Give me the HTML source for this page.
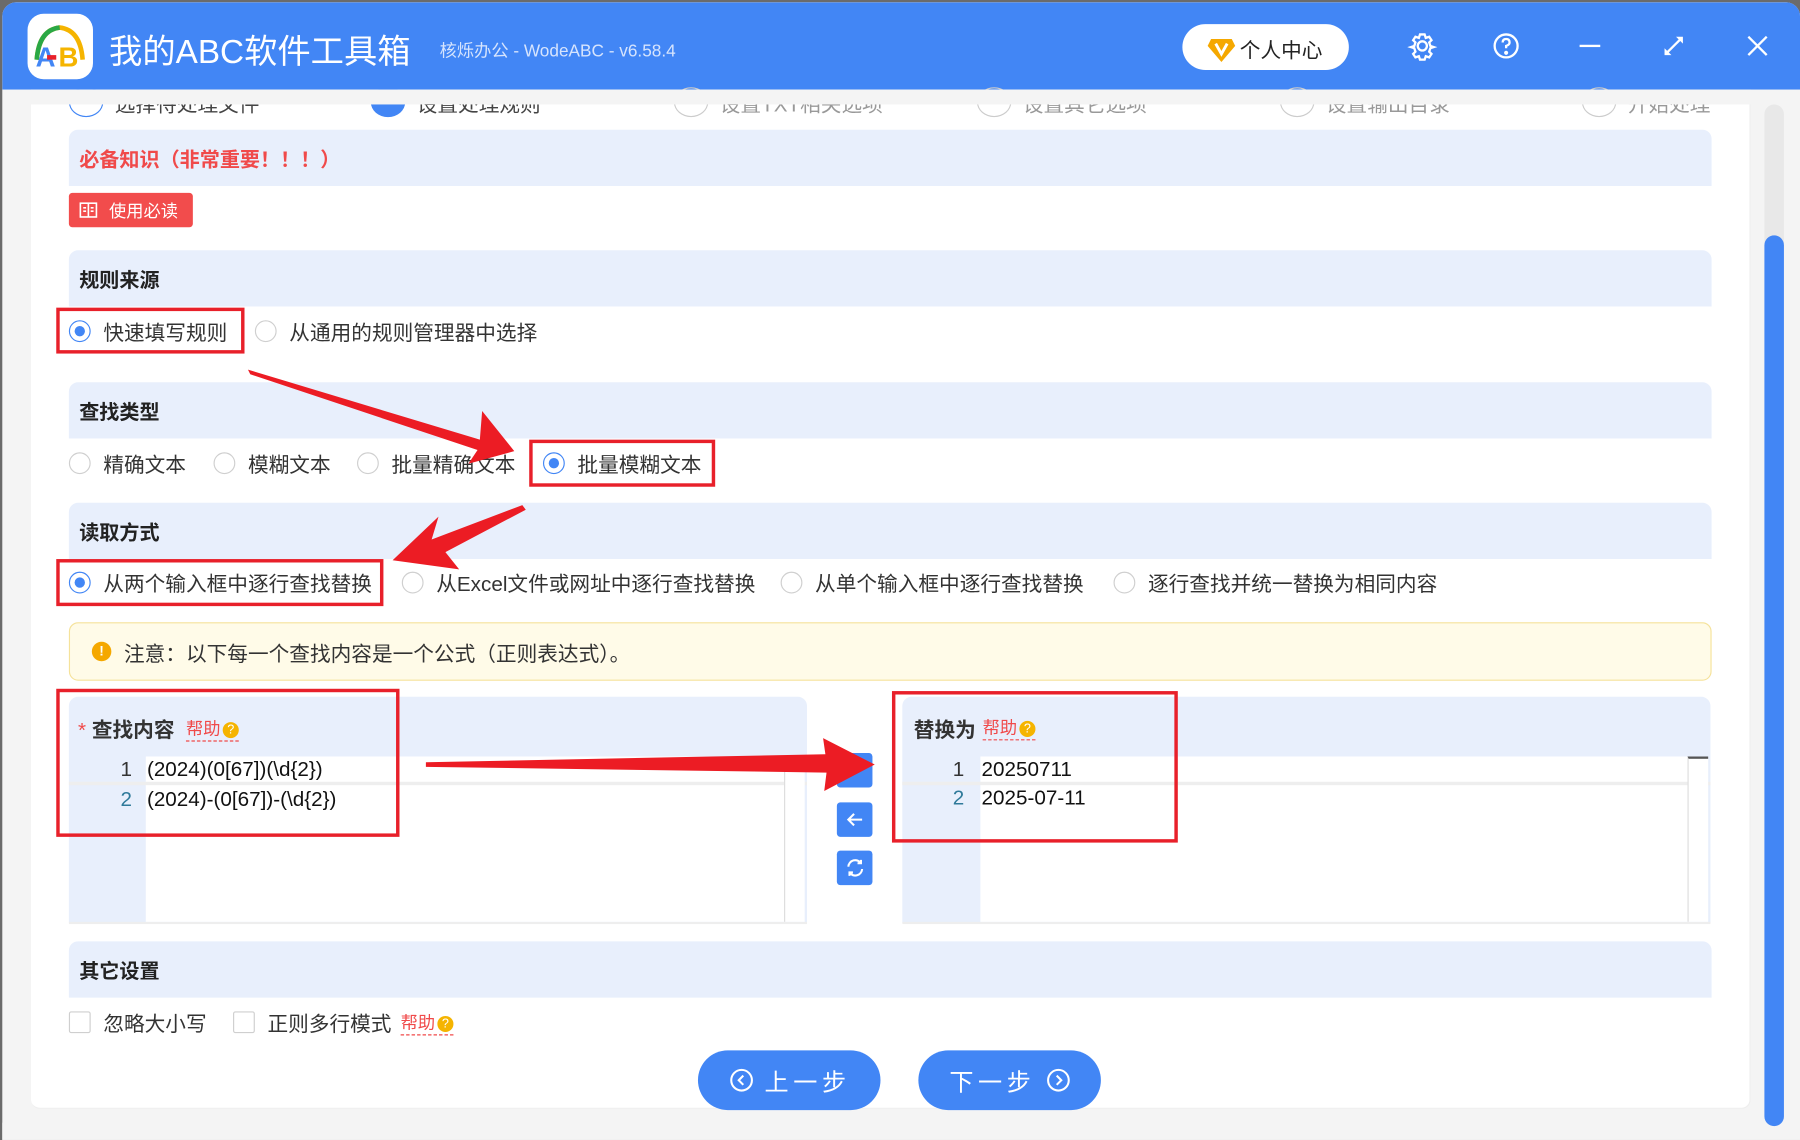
<!DOCTYPE html>
<html><head><meta charset="utf-8"><style>
*{margin:0;padding:0;box-sizing:border-box}
html,body{width:1800px;height:1140px;overflow:hidden;background:#5a5a5a}
#w{position:absolute;left:0;top:0;width:1568px;height:993px;transform:scale(1.14796);transform-origin:0 0;font-family:"Liberation Sans","Noto Sans CJK SC",sans-serif;color:#333}
.a{position:absolute}
.hd{position:absolute;left:60px;width:1431px;height:49px;background:#e8effc;border-radius:8px 8px 0 0;font-weight:bold;font-size:17.5px;padding:13px 0 0 9px;color:#222}
.rb{position:absolute;width:19px;height:19px;border:1px solid #cfcfcf;border-radius:50%;background:#fff}
.rb.on{border-color:#4286f5}
.rb.on:after{content:"";position:absolute;left:4px;top:4px;width:9px;height:9px;border-radius:50%;background:#4286f5}
.t{position:absolute;font-size:18px;color:#333;white-space:nowrap}
.red{position:absolute;border:3px solid #e8202a}
.cb{position:absolute;width:19px;height:19px;border:1px solid #cfcfcf;border-radius:2px;background:#fff}
.help{position:absolute;font-size:15px;color:#f04a4a;border-bottom:1px dashed #f04a4a;white-space:nowrap}
.q{display:inline-block;width:14px;height:14px;border-radius:50%;background:#f5b400;color:#fff;font-size:11px;text-align:center;line-height:14px;margin-left:2px;vertical-align:1px}
.mb{position:absolute;left:729px;width:31px;height:30px;background:#4286f5;border-radius:3px}
</style></head><body><div id="w">
<div class="a" style="left:0;top:0;width:1568px;height:993px;background:#6b6b6b"></div>
<div class="a" style="left:2px;top:2px;width:1566px;height:991px;background:#f4f4f4;border-radius:12px 12px 0 0;overflow:hidden">
<div class="a" style="left:0;top:0;width:1566px;height:76px;background:#4286f5"></div>
</div>
<div class="a" style="left:24px;top:12px;width:57px;height:57px;background:#fff;border-radius:14px"></div>
<svg class="a" style="left:24px;top:12px" width="57" height="57" viewBox="0 0 57 57">
<path d="M8 40 Q10 14 28 12 Q46 14 48 40" fill="none" stroke="#f5b400" stroke-width="4"/>
<path d="M8 40 Q10 14 28 12" fill="none" stroke="#2aa845" stroke-width="4"/>
<text x="7" y="46" font-family="Liberation Sans" font-weight="bold" font-size="24" fill="#4286f5">A</text>
<text x="27" y="46" font-family="Liberation Sans" font-weight="bold" font-size="24" fill="#f5b400">B</text>
<rect x="17" y="36" width="8" height="4" fill="#e8202a"/>
</svg>
<div class="t" style="left:95px;top:22px;font-size:29px;color:#fff">我的ABC软件工具箱</div>
<div class="t" style="left:383px;top:33px;font-size:15px;color:#d6e4fd">核烁办公 - WodeABC - v6.58.4</div>
<div class="a" style="left:1030px;top:21px;width:145px;height:40px;background:#fff;border-radius:20px"></div>
<svg class="a" style="left:1051px;top:30px" width="26" height="26" viewBox="0 0 26 26"><path d="M4 4h18l3 6-12 14L1 10z" fill="#f5a800"/><path d="M8 8l5 9 5-9" fill="none" stroke="#fff" stroke-width="2.5"/></svg>
<div class="t" style="left:1080px;top:30px;font-size:18px;color:#222">个人中心</div>
<svg class="a" style="left:1226px;top:27px" width="26" height="26" viewBox="0 0 26 26" fill="none" stroke="#fff" stroke-width="2"><circle cx="13" cy="13" r="4"/><path d="M11 3h4l1 3 3-1 2 3-2 2 1 3 3 1v0l-3 1-1 3 2 2-2 3-3-1-1 3h-4l-1-3-3 1-2-3 2-2-1-3-3-1 3-1 1-3-2-2 2-3 3 1z"/></svg>
<svg class="a" style="left:1299px;top:27px" width="26" height="26" viewBox="0 0 26 26" fill="none" stroke="#fff" stroke-width="2"><circle cx="13" cy="13" r="10"/><path d="M10 10q0-3 3-3t3 3q0 2-3 3v2"/><circle cx="13" cy="19" r="0.8" fill="#fff"/></svg>
<div class="a" style="left:1376px;top:39px;width:18px;height:2px;background:#fff"></div>
<svg class="a" style="left:1447px;top:29px" width="22" height="22" viewBox="0 0 22 22" stroke="#fff" stroke-width="2" fill="#fff"><path d="M4 18L18 4"/><path d="M13 3h6v6z M3 13v6h6z" stroke="none"/></svg>
<svg class="a" style="left:1520px;top:29px" width="22" height="22" viewBox="0 0 22 22" stroke="#fff" stroke-width="2"><path d="M3 3l16 16M19 3L3 19"/></svg>
<div class="a" style="left:27px;top:91px;width:1498px;height:875px;background:#fff;border-right:1px solid #eee;border-bottom:1px solid #eee;border-radius:0 0 8px 8px"></div>
<div class="a" style="left:2px;top:978px;width:1566px;height:15px;background:#f4f4f4"></div>
<div class="a" style="left:27px;top:78px;width:1498px;height:13px;background:#f4f4f4;z-index:2"></div>
<div class="a" style="left:60px;top:76px;width:30px;height:26px;border:1px solid #4286f5;border-radius:50%"></div>
<div class="t" style="left:100px;top:77px;color:#444">选择待处理文件</div>
<div class="a" style="left:323px;top:76px;width:30px;height:26px;background:#4286f5;border-radius:50%"></div>
<div class="t" style="left:363px;top:77px;color:#444">设置处理规则</div>
<div class="a" style="left:587px;top:76px;width:30px;height:26px;border:1px solid #ccc;border-radius:50%"></div>
<div class="t" style="left:627px;top:77px;color:#999">设置TXT相关选项</div>
<div class="a" style="left:851px;top:76px;width:30px;height:26px;border:1px solid #ccc;border-radius:50%"></div>
<div class="t" style="left:891px;top:77px;color:#999">设置其它选项</div>
<div class="a" style="left:1115px;top:76px;width:30px;height:26px;border:1px solid #ccc;border-radius:50%"></div>
<div class="t" style="left:1155px;top:77px;color:#999">设置输出目录</div>
<div class="a" style="left:1378px;top:76px;width:30px;height:26px;border:1px solid #ccc;border-radius:50%"></div>
<div class="t" style="left:1418px;top:77px;color:#999">开始处理</div>
<div class="a" style="left:1537px;top:91px;width:17px;height:890px;background:#e8e8e8;border-radius:9px"></div>
<div class="a" style="left:1537px;top:205px;width:17px;height:776px;background:#4286f5;border-radius:9px"></div>

<div class="hd" style="top:113px;color:#f04a4a">必备知识（非常重要！！！）</div>
<div class="a" style="left:60px;top:168px;width:108px;height:30px;background:#f24c4c;border-radius:3px"></div>
<svg class="a" style="left:69px;top:176px" width="16" height="14" viewBox="0 0 16 14" fill="none" stroke="#fff" stroke-width="1.4"><rect x="1" y="1" width="14" height="12"/><path d="M8 1v12M3.5 5h2.5M3.5 8h2.5M10 5h2.5M10 8h2.5"/></svg>
<div class="t" style="left:95px;top:173px;font-size:15px;color:#fff">使用必读</div>

<div class="hd" style="top:218px">规则来源</div>
<div class="rb on" style="left:60px;top:279px"></div><div class="t" style="left:90px;top:276px">快速填写规则</div>
<div class="rb" style="left:222px;top:279px"></div><div class="t" style="left:252px;top:276px">从通用的规则管理器中选择</div>
<div class="red" style="left:49px;top:268px;width:164px;height:40px"></div>

<div class="hd" style="top:333px">查找类型</div>
<div class="rb" style="left:60px;top:394px"></div><div class="t" style="left:90px;top:391px">精确文本</div>
<div class="rb" style="left:186px;top:394px"></div><div class="t" style="left:216px;top:391px">模糊文本</div>
<div class="rb" style="left:311px;top:394px"></div><div class="t" style="left:341px;top:391px">批量精确文本</div>
<div class="rb on" style="left:473px;top:394px"></div><div class="t" style="left:503px;top:391px">批量模糊文本</div>
<div class="red" style="left:461px;top:383px;width:162px;height:41px"></div>

<div class="hd" style="top:438px">读取方式</div>
<div class="rb on" style="left:60px;top:498px"></div><div class="t" style="left:90px;top:495px">从两个输入框中逐行查找替换</div>
<div class="rb" style="left:350px;top:498px"></div><div class="t" style="left:380px;top:495px">从Excel文件或网址中逐行查找替换</div>
<div class="rb" style="left:680px;top:498px"></div><div class="t" style="left:710px;top:495px">从单个输入框中逐行查找替换</div>
<div class="rb" style="left:970px;top:498px"></div><div class="t" style="left:1000px;top:495px">逐行查找并统一替换为相同内容</div>
<div class="red" style="left:49px;top:487px;width:285px;height:41px"></div>

<div class="a" style="left:60px;top:542px;width:1431px;height:51px;background:#fffbe8;border:1px solid #f5e29a;border-radius:8px"></div>
<div class="a" style="left:80px;top:559px;width:17px;height:17px;border-radius:50%;background:#f5a800;color:#fff;font-size:12px;text-align:center;line-height:17px;font-weight:bold">!</div>
<div class="t" style="left:108px;top:556px">注意：以下每一个查找内容是一个公式（正则表达式）。</div>

<div class="a" style="left:60px;top:607px;width:643px;height:198px;background:#e8effc;border-radius:8px 8px 0 0;border-bottom:2px solid #eee"></div>
<div class="t" style="left:68px;top:622px;font-weight:bold"><span style="color:#f04a4a;font-weight:normal">*</span> 查找内容</div>
<div class="help" style="left:162px;top:624px">帮助<span class="q">?</span></div>
<div class="a" style="left:127px;top:659px;width:556px;height:144px;background:#fff"></div>
<div class="a" style="left:60px;top:659px;width:643px;height:25px;border-bottom:3px solid #eee"></div>
<div class="a" style="left:683px;top:659px;width:18px;height:144px;background:#fff;border-left:1px solid #ddd"></div>
<div class="t" style="left:105px;top:660px">1</div><div class="t" style="left:128px;top:660px;color:#111">(2024)(0[67])(\d{2})</div>
<div class="t" style="left:105px;top:686px;color:#2f7a9a">2</div><div class="t" style="left:128px;top:686px;color:#111">(2024)-(0[67])-(\d{2})</div>
<div class="red" style="left:49px;top:600px;width:299px;height:129px"></div>

<div class="mb" style="top:656px"></div>
<div class="mb" style="top:699px"></div><svg class="a" style="left:735px;top:704px" width="20" height="20" viewBox="0 0 20 20" fill="none" stroke="#fff" stroke-width="1.8"><path d="M16 10H4M9 5l-5 5 5 5"/></svg>
<div class="mb" style="top:741px"></div><svg class="a" style="left:735px;top:746px" width="20" height="20" viewBox="0 0 20 20" fill="none" stroke="#fff" stroke-width="1.8"><path d="M4 9a6 6 0 0 1 11-3M16 11a6 6 0 0 1-11 3"/><path d="M15 3v3h-3M5 17v-3h3"/></svg>

<div class="a" style="left:786px;top:607px;width:704px;height:198px;background:#e8effc;border-radius:8px 8px 0 0;border-bottom:2px solid #eee"></div>
<div class="t" style="left:796px;top:622px;font-weight:bold">替换为</div>
<div class="help" style="left:856px;top:623px">帮助<span class="q">?</span></div>
<div class="a" style="left:854px;top:659px;width:616px;height:144px;background:#fff"></div>
<div class="a" style="left:786px;top:659px;width:704px;height:25px;border-bottom:3px solid #eee"></div>
<div class="a" style="left:1470px;top:659px;width:18px;height:144px;background:#fff;border-left:1px solid #ddd;border-top:2px solid #555"></div>
<div class="t" style="left:830px;top:660px">1</div><div class="t" style="left:855px;top:660px;color:#111">20250711</div>
<div class="t" style="left:830px;top:685px;color:#2f7a9a">2</div><div class="t" style="left:855px;top:685px;color:#111">2025-07-11</div>
<div class="red" style="left:777px;top:602px;width:249px;height:132px"></div>

<div class="hd" style="top:820px">其它设置</div>
<div class="cb" style="left:60px;top:881px"></div><div class="t" style="left:90px;top:878px">忽略大小写</div>
<div class="cb" style="left:203px;top:881px"></div><div class="t" style="left:233px;top:878px">正则多行模式</div>
<div class="help" style="left:349px;top:880px">帮助<span class="q">?</span></div>

<div class="a" style="left:608px;top:915px;width:159px;height:52px;background:#4286f5;border-radius:26px"></div>
<svg class="a" style="left:635px;top:930px" width="22" height="22" viewBox="0 0 22 22" fill="none" stroke="#fff" stroke-width="1.8"><circle cx="11" cy="11" r="9"/><path d="M12.5 7l-4 4 4 4"/></svg>
<div class="t" style="left:666px;top:927px;color:#fff;font-size:21px;letter-spacing:4px">上一步</div>
<div class="a" style="left:800px;top:915px;width:159px;height:52px;background:#4286f5;border-radius:26px"></div>
<div class="t" style="left:827px;top:927px;color:#fff;font-size:21px;letter-spacing:4px">下一步</div>
<svg class="a" style="left:911px;top:930px" width="22" height="22" viewBox="0 0 22 22" fill="none" stroke="#fff" stroke-width="1.8"><circle cx="11" cy="11" r="9"/><path d="M9.5 7l4 4-4 4"/></svg>

<svg class="a" style="left:0;top:0" width="1568" height="993" viewBox="0 0 1568 993">
<g fill="#ec1c24">
<path d="M216 322 L218 326 L416 392 L408 404 L448 393 L420 358 L418 383 Z"/>
<path d="M458 444 L455 440 L376 470 L382 450 L342 488 L400 496 L388 481 Z"/>
<path d="M371 664 L371 668 L720 673 L718 689 L762 666 L717 643 L719 657 Z"/>
</g>
</svg>
</div></body></html>
